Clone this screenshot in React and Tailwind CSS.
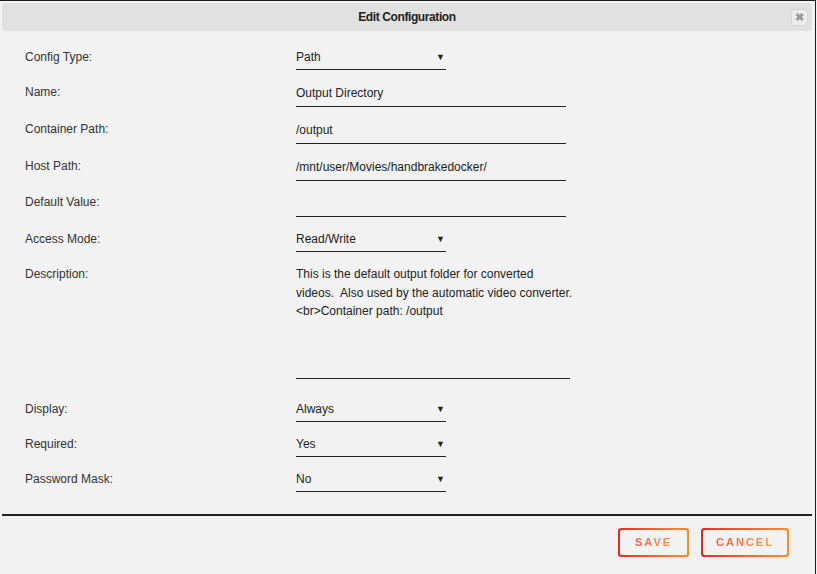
import React from "react";

const font = { fontFamily: '"Liberation Sans", Arial, sans-serif' };

function Label({ children, pt = "pt-[3px]" }) {
  return (
    <div className={`w-[271px] shrink-0 ${pt} leading-[18px] text-[12px] text-[#333]`}>
      {children}
    </div>
  );
}

function SelectRow({ label, value, mt }) {
  return (
    <div className={`flex ${mt}`}>
      <Label>{label}</Label>
      <div className="relative w-[150px] h-[25px] pt-[3px] leading-[18px] text-[12px] text-[#222] border-b border-[#222]">
        {value}
        <span className="absolute right-[1px] top-[7px] text-[9px] leading-[10px] text-[#222]">▼</span>
      </div>
    </div>
  );
}

function InputRow({ label, value, mt }) {
  return (
    <div className={`flex ${mt}`}>
      <Label pt="pt-[1px]">{label}</Label>
      <div className="w-[270px] h-[25px] pt-[2px] leading-[18px] text-[12px] text-[#222] border-b border-[#222]">
        {value}
      </div>
    </div>
  );
}

function GradButton({ children, w }) {
  return (
    <div className={`${w} h-[29px] rounded-[3px] p-[2px] bg-linear-to-r from-[#e22828] to-[#ff8c2f]`}>
      <div className="w-full h-full rounded-[2px] bg-[#f2f2f2] flex items-center justify-center">
        <span className="text-[11px] font-bold tracking-[2px] bg-linear-to-r from-[#f5584a] to-[#ff9a3a] bg-clip-text text-transparent">
          {children}
        </span>
      </div>
    </div>
  );
}

export default function App() {
  return (
    <div style={font} className="w-[817px] h-[574px] bg-[#f2f2f2] overflow-hidden">
      <div className="w-[816px] h-[574px] border-t border-r border-[#1c1c1c] pt-[2px] px-[2px]">
        <div className="relative h-[28px] mr-[1px] rounded-[4px] bg-[#e1e1e1] flex items-center justify-center">
          <span className="text-[12px] font-bold text-[#222] tracking-[-0.4px]">Edit Configuration</span>
          <div className="absolute right-[4px] top-[6px] w-[17px] h-[17px] rounded-[3px] border border-[#d6d6d6] bg-[#ececec] flex items-center justify-center">
            <span className="text-[11px] font-bold leading-none text-[#9a9a9a]">✖</span>
          </div>
        </div>

        <div className="pl-[23px]">
          <SelectRow label="Config Type:" value="Path" mt="mt-[14px]" />
          <InputRow label="Name:" value="Output Directory" mt="mt-[12px]" />
          <InputRow label="Container Path:" value="/output" mt="mt-[12px]" />
          <InputRow label="Host Path:" value="/mnt/user/Movies/handbrakedocker/" mt="mt-[12px]" />
          <InputRow label="Default Value:" value="" mt="mt-[11px]" />
          <SelectRow label="Access Mode:" value="Read/Write" mt="mt-[10px]" />
          <div className="flex mt-[10px]">
            <Label>Description:</Label>
            <div className="w-[274px] h-[117px] pt-[3px] border-b border-[#222]">
              <div className="w-[285px] leading-[18.5px] text-[12px] text-[#222] whitespace-pre">
                {"This is the default output folder for converted\nvideos.  Also used by the automatic video converter.\n<br>Container path: /output"}
              </div>
            </div>
          </div>
          <SelectRow label="Display:" value="Always" mt="mt-[18px]" />
          <SelectRow label="Required:" value="Yes" mt="mt-[10px]" />
          <SelectRow label="Password Mask:" value="No" mt="mt-[10px]" />
        </div>

        <div className="mt-[22px] mr-[1px] h-[2px] bg-[#222]" />
        <div className="flex justify-end gap-[12px] mt-[12px] pr-[24px]">
          <GradButton w="w-[71px]">SAVE</GradButton>
          <GradButton w="w-[88px]">CANCEL</GradButton>
        </div>
      </div>
    </div>
  );
}
